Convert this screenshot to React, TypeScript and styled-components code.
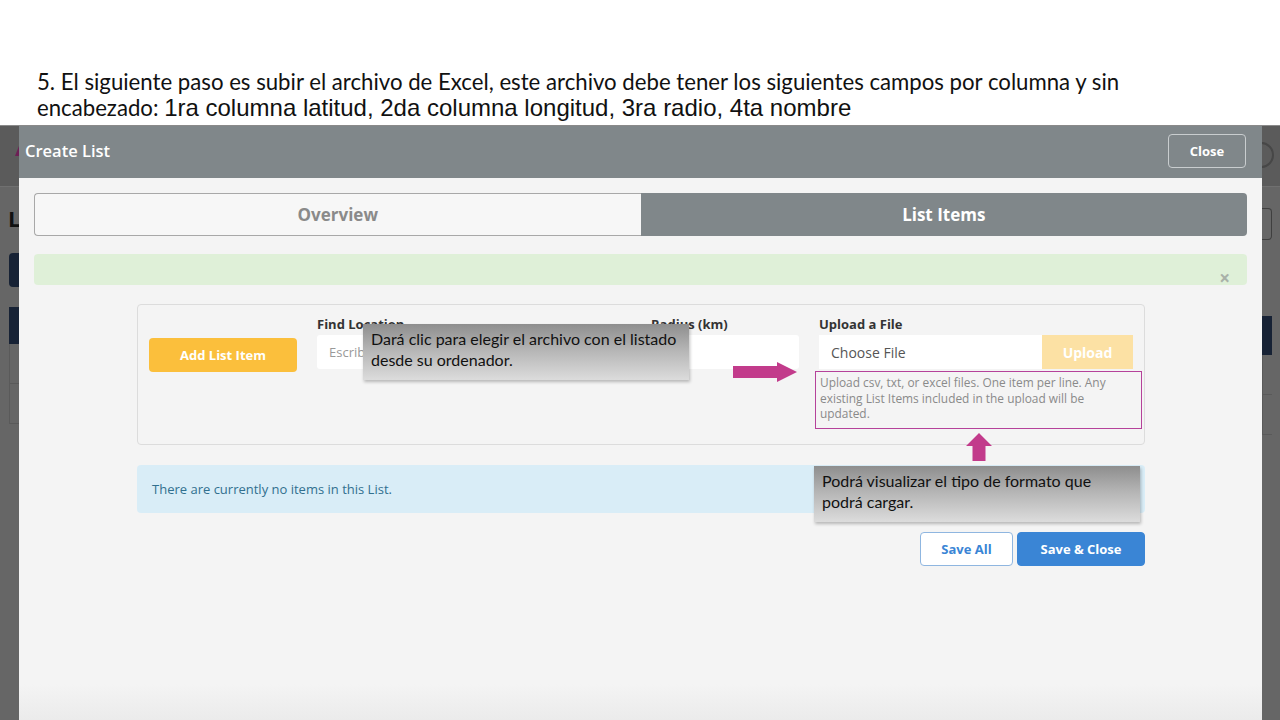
import React from "react";
import styled, { createGlobalStyle } from "styled-components";

const GlobalStyle = createGlobalStyle`
  html, body {
    margin: 0;
    padding: 0;
    background: #ffffff;
  }
  body {
    width: 1280px;
    height: 720px;
    overflow: hidden;
    font-family: "Open Sans", "Noto Sans", sans-serif;
  }
  * {
    box-sizing: border-box;
  }
`;

const App = () => {
  return (
    <>
      <GlobalStyle />
      <StPage>
        <StCaption>
          <StCaptionLine>
            5. El siguiente paso es subir el archivo de Excel, este archivo debe tener los siguientes campos por columna y sin
          </StCaptionLine>
          <StCaptionLine>
            encabezado: <StCaptionArial>1ra columna latitud, 2da columna longitud, 3ra radio, 4ta nombre</StCaptionArial>
          </StCaptionLine>
        </StCaption>

        <StStage>
          <StStrip>
            <StStripTop>
              <StStripMark />
            </StStripTop>
            <StStripLetter>L</StStripLetter>
            <StStripNavy $top={22} $height={34} $radius="4px 0 0 4px" />
            <StStripNavy $top={20} $height={37} $radius="0" />
            <StStripRow />
            <StStripRow />
          </StStrip>

          <StModal>
            <StModalHeader>
              <StModalTitle>Create List</StModalTitle>
              <StCloseBtn>Close</StCloseBtn>
            </StModalHeader>

            <StModalBody>
              <StTabs>
                <StTab>Overview</StTab>
                <StTab $active>List Items</StTab>
              </StTabs>

              <StAlert>
                <StAlertClose>×</StAlertClose>
              </StAlert>

              <StContent>
                <StPanel>
                  <StColumn>
                    <StAddBtn>Add List Item</StAddBtn>
                  </StColumn>
                  <StColumn>
                    <StLabel>Find Location</StLabel>
                    <StInput>Escribe una ubicación</StInput>
                  </StColumn>
                  <StColumn>
                    <StLabel>Radius (km)</StLabel>
                    <StInput />
                  </StColumn>
                  <StColumn>
                    <StLabel>Upload a File</StLabel>
                    <StFileRow>
                      <StFileInput>Choose File</StFileInput>
                      <StUploadBtn>Upload</StUploadBtn>
                    </StFileRow>
                    <StHelpBox>
                      <StHelpText>
                        Upload csv, txt, or excel files. One item per line. Any existing List Items included in the upload will be updated.
                      </StHelpText>
                    </StHelpBox>
                  </StColumn>

                  <StNote $left={225} $top={19}>
                    Dará clic para elegir el archivo con el listado
                    <br />
                    desde su ordenador.
                  </StNote>
                  <StArrowRight viewBox="0 0 64 20" preserveAspectRatio="none">
                    <path d="M0 4 H44 V0 L64 10 L44 20 V16 H0 Z" fill="#c23b8b" />
                  </StArrowRight>
                  <StArrowUp viewBox="0 0 26 28">
                    <path d="M13 0 L26 13 H19.5 V28 H6.5 V13 H0 Z" fill="#c23b8b" />
                  </StArrowUp>
                </StPanel>

                <StInfoWrap>
                  <StInfo>There are currently no items in this List.</StInfo>
                  <StNote $left={677} $top={1}>
                    Podrá visualizar el tipo de formato que
                    <br />
                    podrá cargar.
                  </StNote>
                </StInfoWrap>

                <StActions>
                  <StActionBtn>Save All</StActionBtn>
                  <StActionBtn $primary>Save &amp; Close</StActionBtn>
                </StActions>
              </StContent>
            </StModalBody>
          </StModal>

          <StStrip $right>
            <StStripTop>
              <StStripCircle />
            </StStripTop>
            <StStripBox />
            <StStripNavy $top={76} $height={39} $radius="0" />
            <StStripRow />
            <StStripRow />
          </StStrip>
        </StStage>
      </StPage>
    </>
  );
};

export default App;

const StPage = styled.div`
  width: 1280px;
  height: 720px;
  display: flex;
  flex-direction: column;
`;

const StCaption = styled.div`
  height: 125px;
  padding: 69px 0 0 37px;
`;

const StCaptionLine = styled.div`
  font-family: "Lato", "Open Sans", sans-serif;
  font-size: 22.2px;
  line-height: 26px;
  color: #111;
  white-space: nowrap;
`;

const StCaptionArial = styled.span`
  font-family: "Liberation Sans", Arial, sans-serif;
  font-size: 24px;
`;

const StStage = styled.div`
  flex: 1;
  display: grid;
  grid-template-columns: 19px 1fr 18px;
  background: #656565;
  border-top: 1px solid #8a8a8a;
  overflow: hidden;
`;

const StStrip = styled.div<{ $right?: boolean }>`
  display: flex;
  flex-direction: column;
  align-items: ${(p) => (p.$right ? "flex-start" : "flex-end")};
  background: #666666;
  overflow: hidden;
`;

const StStripTop = styled.div`
  width: 100%;
  height: 61px;
  background: #5b5b5b;
  position: relative;
  overflow: hidden;
  border-bottom: 1px solid #707070;
`;

const StStripMark = styled.div`
  position: absolute;
  right: 0;
  top: 20px;
  width: 0;
  height: 0;
  border-left: 4px solid transparent;
  border-bottom: 10px solid #6d1f55;
`;

const StStripCircle = styled.div`
  position: absolute;
  left: -14px;
  top: 16px;
  width: 26px;
  height: 26px;
  border-radius: 50%;
  border: 2px solid #474747;
`;

const StStripLetter = styled.div`
  width: 100%;
  padding: 18px 0 0 8px;
  font-size: 22px;
  font-weight: 700;
  line-height: 26px;
  color: #111;
`;

const StStripNavy = styled.div<{ $top: number; $height: number; $radius: string }>`
  width: 10px;
  margin-top: ${(p) => p.$top}px;
  height: ${(p) => p.$height}px;
  background: #172235;
  border-radius: ${(p) => p.$radius};
  flex-shrink: 0;
`;

const StStripBox = styled.div`
  margin-top: 21px;
  width: 10px;
  height: 32px;
  border: 1px solid #3f3f3f;
  border-left: none;
  border-radius: 0 4px 4px 0;
`;

const StStripRow = styled.div`
  width: 10px;
  height: 40px;
  border-bottom: 1px solid #5a5a5a;
  border-left: 1px solid #5a5a5a;
`;

const StModal = styled.div`
  display: flex;
  flex-direction: column;
  background: linear-gradient(to bottom, #f4f4f4 0%, #f4f4f4 94%, #ebebeb 100%);
`;

const StModalHeader = styled.div`
  height: 52px;
  display: flex;
  align-items: center;
  justify-content: space-between;
  padding: 0 16px 0 6px;
  background: #80878a;
`;

const StModalTitle = styled.h2`
  margin: 0 0 4px;
  font-size: 16.5px;
  font-weight: 600;
  color: #ffffff;
`;

const StCloseBtn = styled.button`
  width: 78px;
  height: 34px;
  margin-top: -3px;
  border: 1px solid #c9cdcf;
  border-radius: 4px;
  background: transparent;
  color: #ffffff;
  font-family: "Open Sans", sans-serif;
  font-size: 13px;
  font-weight: 700;
`;

const StModalBody = styled.div`
  padding: 15px 15px 0;
  display: flex;
  flex-direction: column;
`;

const StTabs = styled.div`
  display: grid;
  grid-template-columns: 1fr 1fr;
  height: 43px;
`;

const StTab = styled.div<{ $active?: boolean }>`
  display: flex;
  align-items: center;
  justify-content: center;
  font-size: 17px;
  font-weight: 700;
  color: ${(p) => (p.$active ? "#ffffff" : "#8a8a8a")};
  background: ${(p) => (p.$active ? "#80878a" : "#f7f7f7")};
  border: ${(p) => (p.$active ? "none" : "1px solid #a8a8a8")};
  border-right: none;
  border-radius: ${(p) => (p.$active ? "0 4px 4px 0" : "4px 0 0 4px")};
`;

const StAlert = styled.div`
  position: relative;
  margin-top: 18px;
  height: 31px;
  background: #dff0d8;
  border-radius: 4px;
`;

const StAlertClose = styled.span`
  position: absolute;
  right: 17px;
  top: 14px;
  font-size: 19px;
  line-height: 20px;
  font-weight: 700;
  color: #a9b1a8;
`;

const StContent = styled.div`
  margin: 19px 102px 0 103px;
  display: flex;
  flex-direction: column;
`;

const StPanel = styled.div`
  position: relative;
  height: 141px;
  padding: 10px 11px;
  display: grid;
  grid-template-columns: 148px 314px 1fr 314px;
  column-gap: 20px;
  border: 1px solid #dcdcdc;
  border-radius: 4px;
  background: #f4f4f4;
`;

const StColumn = styled.div`
  display: flex;
  flex-direction: column;
`;

const StAddBtn = styled.button`
  margin-top: 23px;
  height: 34px;
  border: none;
  border-radius: 4px;
  background: #fbbf3c;
  color: #ffffff;
  font-family: "Open Sans", sans-serif;
  font-size: 13px;
  font-weight: 700;
`;

const StLabel = styled.label`
  height: 20px;
  font-size: 13px;
  font-weight: 700;
  line-height: 18px;
  color: #333333;
`;

const StInput = styled.div`
  height: 34px;
  padding: 0 12px;
  display: flex;
  align-items: center;
  background: #ffffff;
  border-radius: 3px;
  font-size: 13px;
  color: #999999;
  white-space: nowrap;
  overflow: hidden;
`;

const StFileRow = styled.div`
  display: flex;
  height: 34px;
`;

const StFileInput = styled.div`
  flex: 1;
  padding: 0 12px;
  display: flex;
  align-items: center;
  background: #ffffff;
  font-size: 14px;
  color: #555555;
`;

const StUploadBtn = styled.div`
  width: 91px;
  display: flex;
  align-items: center;
  justify-content: center;
  background: #fce1a4;
  color: #ffffff;
  font-size: 14px;
  font-weight: 700;
`;

const StHelpBox = styled.div`
  margin: 2px -9px 0 -4px;
  padding: 3px 9px 6px 4px;
  border: 1px solid #b5429a;
`;

const StHelpText = styled.p`
  margin: 0;
  max-width: 292px;
  font-size: 11.9px;
  line-height: 15.5px;
  color: #8a8a8a;
`;

const StNote = styled.div<{ $left: number; $top: number }>`
  position: absolute;
  left: ${(p) => p.$left}px;
  top: ${(p) => p.$top}px;
  width: 326px;
  height: 56px;
  padding: 4px 8px;
  background: linear-gradient(to bottom, #8e8e8e 0%, #b4b4b4 45%, #dcdcdc 100%);
  box-shadow: 1px 2px 3px rgba(0, 0, 0, 0.25);
  font-family: "Lato", "Open Sans", sans-serif;
  font-size: 16px;
  line-height: 21px;
  color: #111111;
  z-index: 2;
`;

const StArrowRight = styled.svg`
  position: absolute;
  left: 595px;
  top: 57px;
  width: 64px;
  height: 20px;
  z-index: 2;
`;

const StArrowUp = styled.svg`
  position: absolute;
  left: 828px;
  top: 128px;
  width: 26px;
  height: 28px;
  z-index: 2;
`;

const StInfoWrap = styled.div`
  position: relative;
  margin-top: 20px;
`;

const StInfo = styled.div`
  height: 48px;
  padding: 0 15px;
  display: flex;
  align-items: center;
  background: #d9edf7;
  border-radius: 4px;
  font-size: 13px;
  color: #31708f;
`;

const StActions = styled.div`
  margin-top: 19px;
  display: flex;
  justify-content: flex-end;
  gap: 4px;
`;

const StActionBtn = styled.button<{ $primary?: boolean }>`
  width: ${(p) => (p.$primary ? "128px" : "93px")};
  height: 34px;
  border: 1px solid ${(p) => (p.$primary ? "#3a85d5" : "#8fb6e0")};
  border-radius: 4px;
  background: ${(p) => (p.$primary ? "#3a85d5" : "#ffffff")};
  color: ${(p) => (p.$primary ? "#ffffff" : "#3a85d5")};
  font-family: "Open Sans", sans-serif;
  font-size: 13px;
  font-weight: 700;
`;
